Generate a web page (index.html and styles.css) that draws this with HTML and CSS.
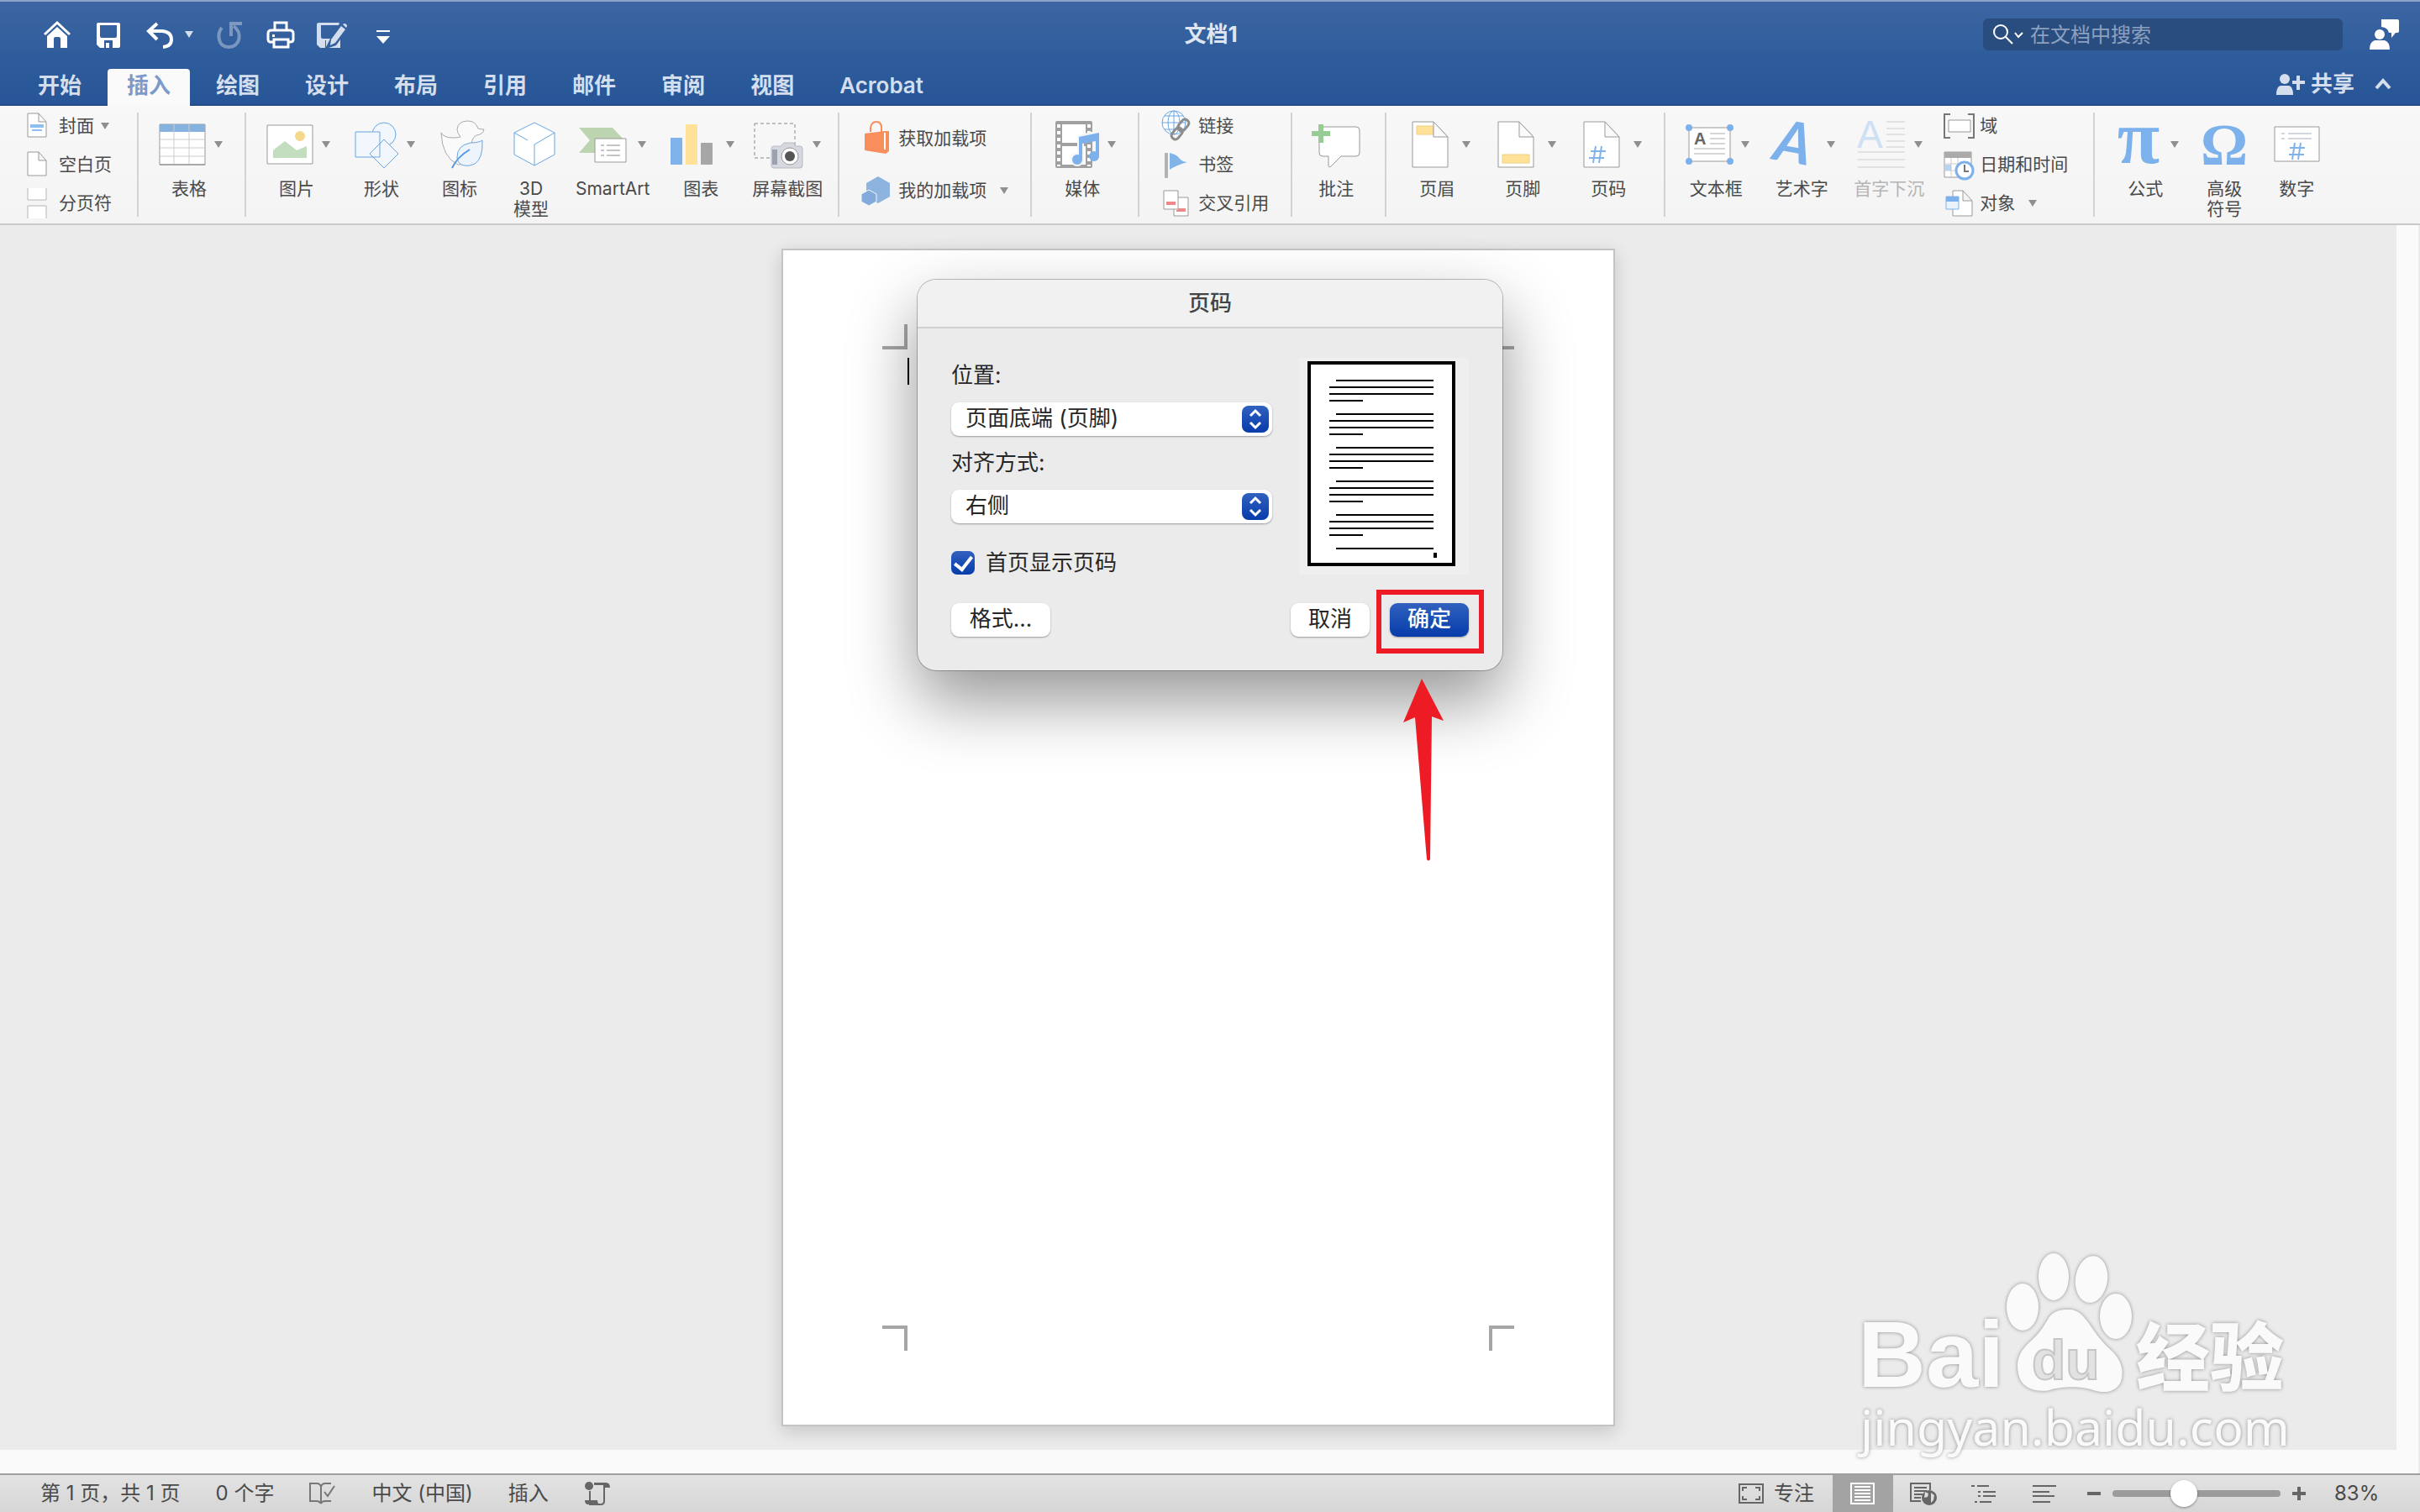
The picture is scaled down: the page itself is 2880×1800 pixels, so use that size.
FILE: index.html
```html
<!doctype html>
<html lang="zh-CN">
<head>
	<meta charset="utf-8">
	<title>文档1</title>
	<link rel="stylesheet" href="styles.css">
</head>
<body>
	<header class="header">
		<div class="title-bar">
			<div class="quick">
				<button class="quick-btn" aria-label="主页"><svg viewBox="0 0 36 36"><path d="M3 18 18 4l15 14" fill="none" stroke="#fff" stroke-width="3"/><path d="M6 20 18 9l12 11v14h-8V23q0-2-2-2h-4q-2 0-2 2v11H6z" fill="#fff"/></svg></button>
				<button class="quick-btn" aria-label="保存"><svg viewBox="0 0 36 36"><path d="M6 4h24q2 0 2 2v26q0 2-2 2H8l-4-4V6q0-2 2-2zm2 3v13q0 2 2 2h16q2 0 2-2V7zm5 27h2v-6h4v6h4v-9H13z" fill="#fff" fill-rule="evenodd"/></svg></button>
				<button class="quick-btn quick-undo" aria-label="撤消"><svg viewBox="0 0 36 36"><path d="M15 5 5 14l10 10M6 14h15q11 1 11 10 0 8-10 9" fill="none" stroke="#fff" stroke-width="4"/></svg><i class="arrow"></i></button>
				<button class="quick-btn dim" aria-label="恢复"><svg viewBox="0 0 36 36"><path d="M9 10c-6 7-5 23 8 23 14 0 17-17 6-25M33 5H20v15" fill="none" stroke="#fff" stroke-width="4"/></svg></button>
				<button class="quick-btn" aria-label="打印"><svg viewBox="0 0 36 36"><g fill="none" stroke="#fff" stroke-width="3"><path d="M11 13V4h14v9M9 27H5q-2-1-2-3v-7q0-4 4-4h22q4 0 4 4v7q0 3-4 3h-2"/><path d="M10 24h17v9H10z"/></g><path d="M8 18h3v3H8z" fill="#fff"/></svg></button>
				<button class="quick-btn" aria-label="另存为"><svg viewBox="0 0 36 36"><path d="M3 4h24l-1 3H5v14q0 2 2 2h9l-5 10v-8h-1v9H4l-4-4V6q0-2 3-2zM28 24v10H14l9-3z" fill="#d4deed"/><path d="m17 24 12-16 5 4-12 16-6 3zM31 6q2-2 4 0 2 1 0 4z" fill="#d4deed"/></svg></button>
				<button class="quick-btn" aria-label="自定义"><svg viewBox="0 0 36 36"><path d="M10 13h16v2H10zM10 20h16l-8 9z" fill="#fff"/></svg></button>
			</div>
			<h1 class="doc-title">文档1</h1>
			<div class="title-right">
				<label class="search">
					<svg viewBox="0 0 36 24"><g fill="none" stroke="#fff" stroke-width="2"><circle cx="9" cy="9" r="8"/><path d="m15 15 8 8M26 10l4 5 5-5"/></g></svg>
					<input type="text" placeholder="在文档中搜索">
				</label>
				<button class="account" aria-label="账户"><svg viewBox="0 0 36 38"><path d="M14 1h19q2 0 2 2v12q0 2-2 2h-2l-5 6v-6h-3q-1-6-9-7zM0 37q0-9 6-11h12q6 2 6 11z" fill="#fff"/><circle cx="12" cy="19" r="6" fill="#fff"/></svg></button>
			</div>
		</div>
		<nav class="tabs">
			<a class="tab" href="#">开始</a>
			<a class="tab active" href="#">插入</a>
			<a class="tab" href="#">绘图</a>
			<a class="tab" href="#">设计</a>
			<a class="tab" href="#">布局</a>
			<a class="tab" href="#">引用</a>
			<a class="tab" href="#">邮件</a>
			<a class="tab" href="#">审阅</a>
			<a class="tab" href="#">视图</a>
			<a class="tab" href="#">Acrobat</a>
			<div class="tabs-right">
				<button class="share"><svg viewBox="0 0 36 28"><circle cx="11" cy="8" r="6" fill="#d4deed"/><path d="M1 27q0-10 5-11h10q5 1 5 11zM20 10h5V4h4v6h6v4h-6v7h-4v-7h-5z" fill="#d4deed"/></svg>共享</button>
				<button class="collapse" aria-label="折叠"><svg viewBox="0 0 20 14"><path d="m2 12 8-9 8 9" fill="none" stroke="#d4deed" stroke-width="4"/></svg></button>
			</div>
		</nav>
	</header>

	<div class="ribbon">
		<div class="group group-first">
			<div class="rows">
				<button class="row"><svg viewBox="0 0 36 36"><path d="M7 3h13l9 10v18H7zM20 3v10h9" fill="#fff" stroke="#999"/><path d="M10 16h16v4H10zM12 22h12v2H12z" fill="#8fbff0"/></svg>封面<i class="arrow"></i></button>
				<button class="row"><svg viewBox="0 0 36 36"><path d="M7 3h13l9 10v18H7zM20 3v10h9" fill="#fff" stroke="#999"/></svg>空白页</button>
				<button class="row"><svg viewBox="0 0 36 36"><path d="M7 0v14h22V0M7 36V21h22v15" fill="#fff" stroke="#b5b5b5"/></svg>分页符</button>
			</div>
		</div>
		<div class="group">
			<button class="tool"><span class="top"><svg viewBox="0 0 64 64"><path d="M5 8h54v48H5z" fill="#fff" stroke="#999"/><path d="M5 8h54v9H5z" fill="#86b2de"/><path d="M22 8v48M40 8v48M5 26h54M5 36h54M5 46h54" stroke="#ccc"/><path d="M5 56h54" stroke="#888"/></svg><i class="arrow"></i></span>表格</button>
		</div>
		<div class="group group-insert">
			<button class="tool"><span class="top"><svg viewBox="0 0 64 64"><path d="M5 9h54v46H5z" fill="#fff" stroke="#999"/><circle cx="44" cy="22" r="6" fill="#f5d88c"/><path d="m12 48 0-9 14-11 14 11 12-5v14z" fill="#c3ddbf"/></svg><i class="arrow"></i></span>图片</button>
			<button class="tool"><span class="top"><svg viewBox="0 0 64 64"><g fill="#f2f7fd" stroke="#69a5e2"><circle cx="43" cy="20" r="14"/><path d="M9 17h29v30H9zM43 26l17 17-17 17-17-17z"/></g></svg><i class="arrow"></i></span>形状</button>
			<button class="tool"><span class="top"><svg viewBox="0 0 64 64"><path d="M10 18q3 6 14 6 6 0 9-1-4-5-4-9 1-10 13-10 9 0 12 9 3 1 7 1-1 6-9 7-4 2-5 6l-7 27q-3 2-10 2Q11 47 10 18z" fill="#fafafa" stroke="#aaa"/><path d="M59 27q-4 3-14 3-16 3-16 17 0 6 5 9 8 3 16-1 10-6 9-28z" fill="#edf4fc" stroke="#69a5e2"/><path d="M44 38Q29 47 23 60" fill="none" stroke="#5599e0" stroke-width="2"/></svg></span>图标</button>
			<button class="tool"><span class="top"><svg viewBox="0 0 64 64"><path d="m36 6 24 12v26L36 57 12 44V18z" fill="#fff" stroke="#69a5e2"/><path d="M36 57V32l24-14M12 18l16 9" fill="none" stroke="#69a5e2"/></svg></span>3D<br>模型</button>
			<button class="tool"><span class="top"><svg viewBox="0 0 64 64"><path d="M0 12h40l14 15-14 15H0l13-15z" fill="#bcd5b0"/><path d="M19 25h37v28H19z" fill="#fff" stroke="#999"/><path d="M26 33h4m3 0h16M26 39h4m3 0h16M26 45h4m3 0h16" stroke="#c4c4c4" stroke-width="2"/></svg><i class="arrow"></i></span>SmartArt</button>
			<button class="tool"><span class="top"><svg viewBox="0 0 64 64"><rect x="4" y="24" width="14" height="32" rx="1" fill="#80b3eb"/><rect x="22" y="8" width="14" height="48" rx="1" fill="#ffe197"/><rect x="40" y="30" width="14" height="26" rx="1" fill="#a6a6a6"/></svg><i class="arrow"></i></span>图表</button>
			<button class="tool"><span class="top"><svg viewBox="0 0 64 64"><path d="M1 7h48v41H1z" fill="none" stroke="#888" stroke-dasharray="4 3"/><path d="M24 34h8l4-4h11l3 4h5q3 0 3 3v20q0 3-3 3H24q-3 0-3-3V37q0-3 3-3z" fill="#d5d8df" stroke="#b6bac4"/><path d="M22 38h6v18h-6z" fill="#9ba1ae"/><circle cx="43" cy="46" r="10" fill="#fff" stroke="#999"/><circle cx="43" cy="46" r="6" fill="#555"/></svg><i class="arrow"></i></span>屏幕截图</button>
		</div>
		<div class="group group-small">
			<div class="rows rows-two">
				<button class="row"><svg viewBox="0 0 36 36"><path d="M11 10V5q1-7 7-7t6 7v5" fill="none" stroke="#f98e5d" stroke-width="2"/><path d="m4 12 24-3h5v24l-4 3-25-4z" fill="#f98e5d"/><path d="M28 11v20" stroke="#fff" stroke-width="2"/></svg>获取加载项</button>
				<button class="row"><svg viewBox="0 0 36 36"><path d="m20 1 14 8v16l-14 8-14-8V9z" fill="#8db4de"/><path d="m9 17 9 5v9l-9 5-9-5v-9z" fill="#82abdc" stroke="#f5f5f5"/></svg>我的加载项<i class="arrow"></i></button>
			</div>
		</div>
		<div class="group">
			<button class="tool"><span class="top"><svg viewBox="0 0 64 64"><rect x="8" y="4" width="44" height="56" rx="2" fill="#a0a0a0"/><path d="M16 8h28v22H16zM16 34h28v22H16z" fill="#fff"/><path d="M12 8v50M48 8v50" stroke="#fff" stroke-width="4" stroke-dasharray="4 4"/><path d="M38 48V24l22-5v27" fill="none" stroke="#f6f6f6" stroke-width="8"/><circle cx="34" cy="50" r="8" fill="#f6f6f6"/><circle cx="34" cy="50" r="6" fill="#7db1eb"/><circle cx="54" cy="46" r="6" fill="#7db1eb"/><path d="M36 50V23l24-5v28h-4V28l-16 3v19z" fill="#7db1eb"/></svg><i class="arrow"></i></span>媒体</button>
		</div>
		<div class="group group-small">
			<div class="rows">
				<button class="row"><svg viewBox="0 0 36 36"><g fill="none" stroke="#69a5e2"><circle cx="15" cy="14" r="14" fill="#fff"/><ellipse cx="15" cy="14" rx="7" ry="14"/><path d="M1 14h28M15 0v28M4 6h22M4 22h22"/></g><g fill="none" stroke="#8d8d8d" stroke-width="3"><rect x="22" y="10" width="9" height="15" rx="4" transform="rotate(40 27 17)"/><rect x="14" y="19" width="9" height="15" rx="4" transform="rotate(40 18 27)"/></g></svg>链接</button>
				<button class="row"><svg viewBox="0 0 36 36"><rect x="4" y="4" width="4" height="30" rx="1" fill="#b2b2b2"/><path d="M10 4q9 2 12 7 4 4 9 4-14 4-21 9z" fill="#82b4ea"/></svg>书签</button>
				<button class="row"><svg viewBox="0 0 36 36"><g fill="#fff" stroke="#999"><path d="M15 11h17v22H15z"/><path d="M3 3h17v22H3z"/></g><path d="M6 16h11v4H6zM20 24h9v4h-11v-2h2z" fill="#ea8a8a"/></svg>交叉引用</button>
			</div>
		</div>
		<div class="group">
			<button class="tool"><span class="top"><svg viewBox="0 0 64 64"><path d="M17 11h39q4 0 4 4v27q0 4-4 4H38L26 58q-3 2-3-1V46h-7q-4 0-4-4V11z" fill="#fff" stroke="#999"/><path d="M11 8h6v8h8v6h-8v8h-6v-8H3v-6h8z" fill="#97cd95"/></svg></span>批注</button>
		</div>
		<div class="group group-wide">
			<button class="tool"><span class="top"><svg viewBox="0 0 64 64"><path d="M11 5h25l17 18v36H11z" fill="#fff" stroke="#999"/><path d="M16 10h20v10H16z" fill="#ffe197" stroke="#eed07f"/><path d="M36 5v18h17z" fill="#fafafa" stroke="#999"/></svg><i class="arrow"></i></span>页眉</button>
			<button class="tool"><span class="top"><svg viewBox="0 0 64 64"><path d="M11 5h25l17 18v36H11z" fill="#fff" stroke="#999"/><path d="M16 44h32v10H16z" fill="#ffe197" stroke="#eed07f"/><path d="M36 5v18h17z" fill="#fafafa" stroke="#999"/></svg><i class="arrow"></i></span>页脚</button>
			<button class="tool"><span class="top"><svg viewBox="0 0 64 64"><path d="M11 5h25l17 18v36H11z" fill="#fff" stroke="#999"/><path d="M36 5v18h17z" fill="#fafafa" stroke="#999"/><path d="m25 34-3 20m10-20-3 20M19 40h18M17 48h18" stroke="#80b3eb" stroke-width="2"/></svg><i class="arrow"></i></span>页码</button>
		</div>
		<div class="group group-wide group-text">
			<button class="tool"><span class="top"><svg viewBox="0 0 64 64"><path d="M8 12h49v40H8z" fill="#fff" stroke="#999"/><g fill="#7db1eb"><circle cx="8" cy="12" r="4"/><circle cx="57" cy="12" r="4"/><circle cx="8" cy="52" r="4"/><circle cx="57" cy="52" r="4"/></g><text x="14" y="32" class="glyph-a">A</text><path d="M33 19h18M33 25h18M33 31h18M14 37h37M14 43h37" stroke="#d6d6d6" stroke-width="2"/></svg><i class="arrow"></i></span>文本框</button>
			<button class="tool"><span class="top"><svg viewBox="0 0 64 64"><text x="8" y="54" class="glyph-art" transform="rotate(10 32 32)">A</text></svg><i class="arrow"></i></span>艺术字</button>
			<button class="tool disabled" disabled><span class="top"><svg viewBox="0 0 64 64"><text x="2" y="36" class="glyph-drop">A</text><path d="M37 5h22M37 13h22M37 20h22M37 28h22M37 35h22M3 41h56M3 50h56M3 59h56" stroke="#e2e2e2" stroke-width="2"/></svg><i class="arrow"></i></span>首字下沉</button>
			<div class="rows">
				<button class="row"><svg viewBox="0 0 36 36"><path d="M9 4H2v28h7M30 4h7v28h-7" fill="none" stroke="#777" stroke-width="2"/><path d="M7 11h26v14H7z" fill="#fff" stroke="#999"/></svg>域</button>
				<button class="row"><svg viewBox="0 0 36 36"><path d="M2 3h32v30H2z" fill="#fff" stroke="#999"/><path d="M2 3h32v7H2z" fill="#aaa"/><path d="M10 10v23M18 10v23M2 17h32M2 25h32" stroke="#ccc"/><path d="M3 18h7v7H3z" fill="#b5d3f3"/><circle cx="26" cy="25" r="10" fill="#fff" stroke="#7db1eb" stroke-width="3"/><path d="M26 18v8h5" fill="none" stroke="#777" stroke-width="2"/></svg>日期和时间</button>
				<button class="row"><svg viewBox="0 0 36 36"><path d="M12 3h12l11 12v18H12zM24 3v12h11" fill="#fff" stroke="#999"/><path d="M4 10h15v15H4z" fill="#eaf2fc" stroke="#7db1eb"/><path d="M4 10h15v6H4z" fill="#7db1eb"/></svg>对象<i class="arrow"></i></button>
			</div>
		</div>
		<div class="group group-wide">
			<button class="tool"><span class="top"><svg viewBox="0 0 64 64"><text x="32" y="54" class="glyph-pi">π</text></svg><i class="arrow"></i></span>公式</button>
			<button class="tool"><span class="top"><svg viewBox="0 0 64 64"><text x="32" y="56" class="glyph-omega">Ω</text></svg></span>高级<br>符号</button>
			<button class="tool"><span class="top"><svg viewBox="0 0 64 64"><path d="M6 11h53v41H6z" fill="#fff" stroke="#999"/><path d="M14 19h4m4 0h28M14 25h4m4 0h28" stroke="#d2d6de" stroke-width="2"/><path d="m30 30-3 20m10-20-3 20M24 36h18M23 44h18" stroke="#80b3eb" stroke-width="2"/></svg></span>数字</button>
		</div>
	</div>

	<main class="workspace">
		<div class="canvas">
			<div class="page">
				<span class="mark mark-tl"></span>
				<span class="mark mark-tr"></span>
				<span class="caret"></span>
				<span class="mark mark-bl"></span>
				<span class="mark mark-br"></span>
			</div>
		</div>
	</main>

	<footer class="status">
		<span>第 1 页，共 1 页</span>
		<span>0 个字</span>
		<svg class="status-icon" viewBox="0 0 32 28"><path d="M14 26q-2-3-5-3H1V2h8q4 0 5 4 1-4 5-4h7M14 6v20q1-3 5-3h7M18 12l4 5 8-12" fill="none" stroke="#777" stroke-width="2"/></svg>
		<span>中文 (中国)</span>
		<span>插入</span>
		<svg class="status-icon" viewBox="0 0 32 28"><circle cx="6" cy="5" r="5" fill="#666"/><path d="M7 11v12M12 2h12v21q0 4-4 4H6" fill="none" stroke="#666" stroke-width="2"/><path d="M1 22h15q0 5 4 5H5q-4 0-4-5zM12 1h14q5 0 5 6h-6q0-3-3-3H12z" fill="#666"/></svg>
		<div class="views">
			<button class="focus"><svg viewBox="0 0 30 24"><path d="M1 1h28v22H1zM5 9V5h5M20 5h5v4M5 15v4h5M20 19h5v-4" fill="none" stroke="#666" stroke-width="2"/></svg>专注</button>
			<button class="view current" aria-label="页面视图"><svg viewBox="0 0 32 28"><path d="M2 2h27v24H2zM6 6h19M6 10h19M6 14h19M6 18h19M6 22h19" fill="none" stroke="#fff" stroke-width="2"/></svg></button>
			<button class="view" aria-label="Web 版式"><svg viewBox="0 0 32 28"><path d="M24 10V2H1v21h12M5 7h15M5 11h15M5 15h10M5 19h8" fill="none" stroke="#666" stroke-width="2"/><circle cx="23" cy="19" r="9" fill="#666"/><path d="m18 12 4 2-1 4-4 1zM25 13l4 3-1 6-3 3z" fill="#ddd"/></svg></button>
			<button class="view" aria-label="大纲"><svg viewBox="0 0 32 28"><path d="M1 5h4m3 0h14M9 12h3m3 0h15M9 17h3m3 0h15M5 24h3m3 0h14" stroke="#666" stroke-width="2"/></svg></button>
			<button class="view" aria-label="草稿"><svg viewBox="0 0 32 28"><path d="M2 5h28M2 12h20M2 17h26M2 24h21" stroke="#666" stroke-width="2"/></svg></button>
		</div>
		<div class="zoom">
			<button class="zoom-btn" aria-label="缩小"><svg viewBox="0 0 16 16"><path d="M0 8h16" stroke="#666" stroke-width="4"/></svg></button>
			<input class="zoom-range" type="range" min="0" max="100" value="41" aria-label="缩放">
			<button class="zoom-btn" aria-label="放大"><svg viewBox="0 0 16 16"><path d="M0 8h16M8 0v16" stroke="#666" stroke-width="4"/></svg></button>
			<span class="zoom-value">83%</span>
		</div>
	</footer>

	<div class="dialog" role="dialog" aria-labelledby="dialog-title">
		<h2 class="dialog-title" id="dialog-title">页码</h2>
		<form class="dialog-body">
			<div class="fields">
				<div class="form">
					<label for="position">位置:</label>
					<div class="select">
						<select id="position"><option>页面底端 (页脚)</option></select>
						<svg viewBox="0 0 32 32"><path d="m10 12 6-6 6 6M10 20l6 6 6-6" fill="none" stroke="#fff" stroke-width="3"/></svg>
					</div>
					<label for="align">对齐方式:</label>
					<div class="select">
						<select id="align"><option>右侧</option></select>
						<svg viewBox="0 0 32 32"><path d="m10 12 6-6 6 6M10 20l6 6 6-6" fill="none" stroke="#fff" stroke-width="3"/></svg>
					</div>
					<label class="check"><input type="checkbox" checked>首页显示页码</label>
				</div>
				<div class="preview">
					<svg viewBox="0 0 176 244">
						<path d="M2 2h172v240H2z" fill="#fff" stroke="#000" stroke-width="4"/>
						<path d="M34 23h116M26 31h124M26 39h124M26 47h40M34 63h116M26 71h124M26 79h124M26 87h40M34 103h116M26 111h124M26 119h124M26 127h40M34 143h116M26 151h124M26 159h124M26 167h40M34 183h116M26 191h124M26 199h124M26 207h40M34 223h116" stroke="#000" stroke-width="2"/>
						<path d="M150 228h4v6h-4z"/>
					</svg>
				</div>
			</div>
			<div class="actions">
				<button type="button" class="btn btn-format">格式...</button>
				<button type="button" class="btn">取消</button>
				<button type="button" class="btn primary">确定</button>
			</div>
		</form>
		<svg class="callout" viewBox="0 0 140 350"><path d="M9 21h122v70H9z" fill="none" stroke="#ed1c24" stroke-width="6"/><path d="m60 124 26 50-14-5-2 170q-2 3-4 0L52 170l-14 6z" fill="#ed1c24"/></svg>
	</div>

	<svg class="watermark" viewBox="0 0 540 260">
		<g class="wm-shape">
			<text x="11" y="166" class="wm-bai">Bai</text>
			<ellipse cx="207" cy="71" rx="19" ry="28"/>
			<ellipse cx="244" cy="35" rx="18" ry="28"/>
			<ellipse cx="289" cy="38" rx="19" ry="28" transform="rotate(8 289 38)"/>
			<ellipse cx="318" cy="82" rx="19" ry="27"/>
			<path d="M262 74c12 0 18 8 25 18 8 12 15 21 26 31 12 11 15 25 11 37-6 13-20 14-33 10-13-5-38-5-52 0-15 3-32-2-36-16-5-18 0-29 11-40 11-9 18-19 24-30 6-9 14-10 24-10z"/>
			<text x="342" y="163" class="wm-cn">经验</text>
			<text x="14" y="236" class="wm-url">jingyan.baidu.com</text>
		</g>
		<text x="218" y="157" class="wm-du">du</text>
	</svg>
</body>
</html>
```
FILE: styles.css
```css
*{
	margin:0;
	padding:0;
	box-sizing:border-box;
}
body{
	display:flex;
	flex-direction:column;
	height:100vh;
	overflow:hidden;
	position:relative;
	background:#ebebeb;
	color:#4a4a4a;
	font-family:Inter,"Noto Sans CJK SC",sans-serif;
	font-size:21px;
	line-height:24px;
}
button,input,select{
	border:0;
	background:none;
	color:inherit;
	font:inherit;
	outline:none;
}
svg{
	display:block;
	flex:none;
	overflow:visible;
}
.arrow{
	flex:none;
	border:5px solid transparent;
	border-top:8px solid #8f8f8f;
	border-bottom:0;
}

/* header */
.header{
	flex:none;
	background:linear-gradient(#3d66a2,#2d5b9b 60%,#285597);
	border-top:2px solid #8ca3c9;
	border-bottom:2px solid #244c86;
}
.title-bar{
	display:grid;
	grid-template-columns:1fr auto 1fr;
	align-items:center;
	height:78px;
	padding:0 24px 0 50px;
}
.quick{
	display:flex;
	align-items:center;
	gap:25px;
}
.quick-btn{
	display:flex;
	align-items:center;
	gap:12px;
}
.quick-btn svg{
	width:36px;
	height:36px;
}
.quick-btn .arrow{
	border-top-color:#d4deed;
}
.dim{
	opacity:.35;
}
.doc-title{
	color:#dfe6f1;
	font-size:26px;
	font-weight:700;
	padding-right:24px;
}
.title-right{
	display:flex;
	justify-content:flex-end;
	align-items:center;
	gap:32px;
}
.search{
	display:flex;
	align-items:center;
	gap:8px;
	width:428px;
	height:38px;
	padding:0 12px;
	border-radius:6px;
	background:#2a4d7f;
}
.search svg{
	width:36px;
	height:24px;
}
.search input{
	flex:1;
	color:#fff;
	font-size:24px;
}
.search input::placeholder{
	color:#8ca1c0;
}
.account svg{
	width:36px;
	height:38px;
}
.tabs{
	display:flex;
	align-items:stretch;
	gap:8px;
	height:46px;
	padding:2px 34px 0 22px;
	margin-bottom:-2px;
}
.tab{
	padding:0 23px;
	border-radius:4px 4px 0 0;
	color:#d4deed;
	font-size:26px;
	font-weight:600;
	line-height:40px;
	text-decoration:none;
}
.tab.active{
	background:#fafafa;
	color:#7b9acb;
}
.tabs-right{
	display:flex;
	align-items:center;
	gap:24px;
	height:36px;
	margin-left:auto;
}
.share{
	display:flex;
	align-items:center;
	gap:6px;
	color:#d4deed;
	font-size:26px;
	font-weight:600;
}
.share svg{
	width:36px;
	height:28px;
}
.collapse svg{
	width:20px;
	height:14px;
}

/* ribbon */
.ribbon{
	display:flex;
	flex:none;
	height:142px;
	padding:8px 0;
	background:linear-gradient(#f8f8f8,#f4f4f4);
	border-bottom:2px solid #c9c9c9;
}
.group{
	display:flex;
	gap:20px;
	padding:0 26px 0 20px;
	border-right:2px solid #d2d2d2;
}
.group:last-child{
	border:0;
}
.group-first{
	padding:0 30px 0 26px;
}
.group-insert{
	gap:21px;
	padding-right:18px;
}
.group-wide{
	gap:22px;
}
.group-small{
	padding-left:26px;
}
.group-text{
	padding-right:30px;
}
.tool{
	display:flex;
	flex-direction:column;
	align-items:center;
	justify-content:flex-start;
	padding-top:6px;
	white-space:nowrap;
}
.top{
	display:flex;
	align-items:center;
	gap:6px;
	margin-bottom:9px;
}
.top svg{
	width:64px;
	height:64px;
}
.disabled{
	color:#b5b5b5;
}
.rows{
	display:flex;
	flex-direction:column;
	justify-content:space-between;
}
.rows-two{
	justify-content:space-around;
}
.row{
	display:flex;
	align-items:center;
	gap:8px;
	height:32px;
	white-space:nowrap;
}
.row svg{
	width:36px;
	height:36px;
}
.rows-two .arrow,
.group-text .row .arrow{
	margin-left:8px;
}
.glyph-a{
	font:bold 20px "Liberation Sans",sans-serif;
	fill:#666;
}
.glyph-art{
	font:italic bold 68px Lato,sans-serif;
	fill:#7db1eb;
}
.glyph-drop{
	font:46px "Liberation Sans",sans-serif;
	fill:#cde0f4;
}
.glyph-pi{
	font:bold 92px "Liberation Serif",serif;
	fill:#7db1eb;
	text-anchor:middle;
}
.glyph-omega{
	font:bold 70px "Liberation Serif",serif;
	fill:#7db1eb;
	text-anchor:middle;
}

/* document */
.workspace{
	flex:1;
	min-height:0;
	padding:0 26px 28px 0;
	background:#fafafa;
	border-right:2px solid #ebebeb;
}
.canvas{
	display:flex;
	justify-content:center;
	height:100%;
	padding:28px 0;
	background:#ebebeb;
}
.page{
	display:grid;
	grid-template-columns:30px 30px;
	grid-template-rows:30px 1fr 30px;
	justify-content:space-between;
	height:100%;
	aspect-ratio:992/1402;
	padding:88px 118px;
	background:#fff;
	border:2px solid #c4c4c4;
	box-shadow:0 6px 20px rgba(0,0,0,.16);
}
.mark{
	border:0 solid #a6a6a6;
}
.mark-tl{
	border-width:0 4px 4px 0;
}
.mark-tr{
	border-width:0 0 4px 4px;
}
.mark-bl{
	border-width:4px 4px 0 0;
}
.mark-br{
	border-width:4px 0 0 4px;
}
.caret{
	grid-column:1/-1;
	width:2px;
	height:32px;
	margin:10px 0 0 30px;
	background:#000;
}

/* status bar */
.status{
	display:flex;
	flex:none;
	align-items:center;
	gap:42px;
	height:46px;
	padding:0 50px 0 48px;
	border-top:2px solid #a0a0a0;
	background:linear-gradient(#e3e3e3,#d6d6d6);
	font-size:24px;
}
.status-icon,.view svg{
	width:32px;
	height:28px;
}
.views{
	display:flex;
	align-self:stretch;
	margin-left:auto;
}
.focus{
	display:flex;
	align-items:center;
	gap:12px;
	padding-right:22px;
}
.focus svg{
	width:30px;
	height:24px;
}
.view{
	display:flex;
	align-items:center;
	justify-content:center;
	width:72px;
}
.view.current{
	background:#a3a3a3;
}
.zoom{
	display:flex;
	align-items:center;
	gap:14px;
	margin-left:-27px;
}
.zoom-btn svg{
	width:16px;
	height:16px;
}
.zoom-range{
	appearance:none;
	width:200px;
	height:8px;
	border-radius:4px;
	background:#9b9b9b;
}
.zoom-range::-webkit-slider-thumb{
	appearance:none;
	width:32px;
	height:32px;
	border-radius:50%;
	background:#fff;
	box-shadow:0 1px 3px rgba(0,0,0,.4);
}
.zoom-value{
	width:52px;
	margin-left:20px;
}

/* dialog */
.dialog{
	position:absolute;
	top:333px;
	left:50%;
	width:696px;
	transform:translateX(-50%);
	border-radius:22px;
	background:#ebebeb;
	box-shadow:0 0 0 1px rgba(0,0,0,.25),0 36px 80px rgba(0,0,0,.42);
	color:#262626;
	font-size:26px;
	line-height:30px;
}
.dialog-title{
	height:58px;
	border-bottom:2px solid #d0d0d0;
	border-radius:22px 22px 0 0;
	background:#f1f1f1;
	color:#444;
	font-size:26px;
	font-weight:500;
	line-height:56px;
	text-align:center;
}
.dialog-body{
	padding:35px 40px 40px;
}
.fields{
	display:flex;
	justify-content:space-between;
}
.form{
	display:flex;
	flex-direction:column;
	gap:17px;
	width:382px;
	padding-top:6px;
}
.select{
	position:relative;
	height:40px;
}
.select select{
	appearance:none;
	width:100%;
	height:40px;
	padding:0 40px 2px 17px;
	border-radius:9px;
	background:#fff;
	box-shadow:0 1px 2px rgba(0,0,0,.35);
}
.select svg{
	position:absolute;
	top:4px;
	right:4px;
	width:32px;
	height:32px;
	border-radius:8px;
	background:linear-gradient(#3161bf,#063cab);
	pointer-events:none;
}
.check{
	display:flex;
	align-items:center;
	gap:13px;
	margin-top:15px;
}
.check input{
	appearance:none;
	display:grid;
	place-items:center;
	width:28px;
	height:28px;
	border-radius:7px;
	background:linear-gradient(#3161bf,#063cab);
}
.check input::after{
	content:"";
	width:9px;
	height:17px;
	margin-bottom:4px;
	border:solid #fff;
	border-width:0 4px 4px 0;
	transform:rotate(38deg);
}
.preview{
	height:258px;
	padding:4px 16px 10px 10px;
	background:#efefef;
}
.preview svg{
	width:176px;
	height:244px;
}
.actions{
	display:flex;
	gap:24px;
	margin-top:33px;
}
.btn{
	width:94px;
	height:40px;
	padding-bottom:2px;
	border-radius:9px;
	background:#fff;
	box-shadow:0 1px 2px rgba(0,0,0,.35);
}
.btn-format{
	width:118px;
	margin-right:auto;
}
.primary{
	background:linear-gradient(#3161bf,#063cab);
	color:#fff;
	font-weight:500;
}
.callout{
	position:absolute;
	top:351px;
	left:540px;
	width:140px;
	height:350px;
	pointer-events:none;
}

/* watermark */
.watermark{
	position:absolute;
	right:140px;
	bottom:55px;
	width:540px;
	height:260px;
	pointer-events:none;
}
.wm-shape{
	fill:#fafafa;
	filter:drop-shadow(0 0 2px rgba(0,0,0,.4));
}
.wm-bai{
	font:bold 112px "Liberation Sans",sans-serif;
}
.wm-cn{
	font:900 88px "Noto Sans CJK SC",sans-serif;
}
.wm-url{
	font:59px "Noto Sans",sans-serif;
}
.wm-du{
	font:bold 66px "Liberation Sans",sans-serif;
	fill:#e2e2e2;
	stroke:#c6c6c6;
	stroke-width:2;
}
```
